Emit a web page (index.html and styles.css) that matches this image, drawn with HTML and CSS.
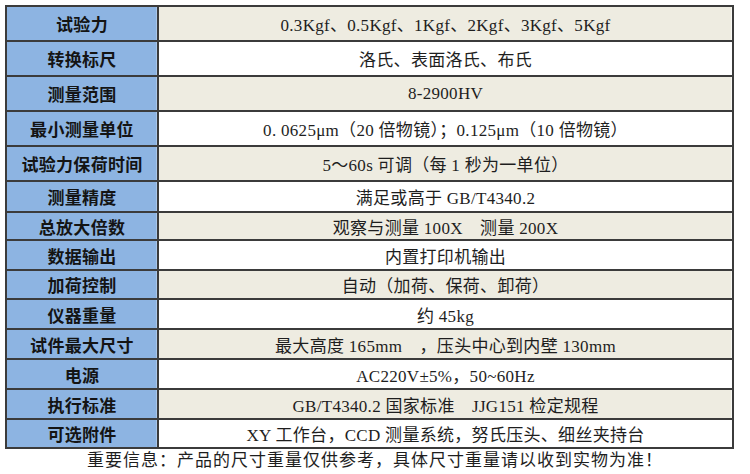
FILE: index.html
```html
<!DOCTYPE html>
<html lang="zh-CN">
<head>
<meta charset="utf-8">
<title>技术参数</title>
<link rel="stylesheet" href="styles.css">
</head>
<body>
<div class="page">
  <div class="spec">
    <div class="row h35 tan"><div class="key">试验力</div><div class="val">0.3Kgf、0.5Kgf、1Kgf、2Kgf、3Kgf、5Kgf</div></div>
    <div class="row h35"><div class="key">转换标尺</div><div class="val">洛氏、表面洛氏、布氏</div></div>
    <div class="row h35 tan"><div class="key">测量范围</div><div class="val">8-2900HV</div></div>
    <div class="row h35"><div class="key">最小测量单位</div><div class="val">0. 0625μm（20 倍物镜）；0.125μm（10 倍物镜）</div></div>
    <div class="row h35 tan"><div class="key">试验力保荷时间</div><div class="val">5～60s 可调（每 1 秒为一单位）</div></div>
    <div class="row h31"><div class="key">测量精度</div><div class="val">满足或高于 GB/T4340.2</div></div>
    <div class="row h28 tan"><div class="key">总放大倍数</div><div class="val">观察与测量 100X　测量 200X</div></div>
    <div class="row h30"><div class="key">数据输出</div><div class="val">内置打印机输出</div></div>
    <div class="row h29 tan"><div class="key">加荷控制</div><div class="val">自动（加荷、保荷、卸荷）</div></div>
    <div class="row h30"><div class="key">仪器重量</div><div class="val">约 45kg</div></div>
    <div class="row h30 tan"><div class="key">试件最大尺寸</div><div class="val">最大高度 165mm　，压头中心到内壁 130mm</div></div>
    <div class="row h30"><div class="key">电源</div><div class="val">AC220V±5%，50~60Hz</div></div>
    <div class="row h30 tan"><div class="key">执行标准</div><div class="val">GB/T4340.2 国家标准　JJG151 检定规程</div></div>
    <div class="row h29"><div class="key">可选附件</div><div class="val">XY 工作台，CCD 测量系统，努氏压头、细丝夹持台</div></div>
  </div>
  <p class="note">重要信息：产品的尺寸重量仅供参考，具体尺寸重量请以收到实物为准！</p>
</div>
</body>
</html>
```

FILE: styles.css
```css
html, body {
  margin: 0;
  padding: 0;
  background: #ffffff;
}

.page {
  width: 750px;
  height: 474px;
  padding-top: 5px;
  box-sizing: border-box;
  overflow: hidden;
}

.spec {
  margin-left: 5px;
  width: 729px;
  box-sizing: border-box;
  border: 2px solid #3b3b3b;
  border-bottom: none;
}

.row {
  display: grid;
  grid-template-columns: 152px 1fr;
  box-sizing: border-box;
  border-bottom: 2px solid #3b3b3b;
  background: #ffffff;
}

.h35 { height: 35px; }
.h31 { height: 31px; }
.h30 { height: 30px; }
.h29 { height: 29px; }
.h28 { height: 28px; }

.key {
  background: #8db4e2;
  border-right: 2px solid #3b3b3b;
  box-shadow: inset -1px 0 0 #a9c6ea;
  display: flex;
  align-items: center;
  justify-content: center;
  font-family: "Noto Sans CJK SC", "Liberation Sans", sans-serif;
  font-weight: 700;
  font-size: 17px;
  color: #141414;
  letter-spacing: 0.3px;
}

.val {
  display: flex;
  align-items: center;
  justify-content: center;
  font-family: "Liberation Serif", "Noto Sans CJK SC", serif;
  font-size: 17px;
  color: #1e1e1e;
  letter-spacing: 0.3px;
}

.tan .val {
  background: #eeece1;
  box-shadow: inset -1px 0 0 #f8f7f2;
}

.note {
  margin: 0;
  height: 24px;
  line-height: 24px;
  text-align: center;
  font-family: "Liberation Serif", "Noto Sans CJK SC", serif;
  font-size: 17px;
  letter-spacing: 1px;
  color: #1e1e1e;
}
```
